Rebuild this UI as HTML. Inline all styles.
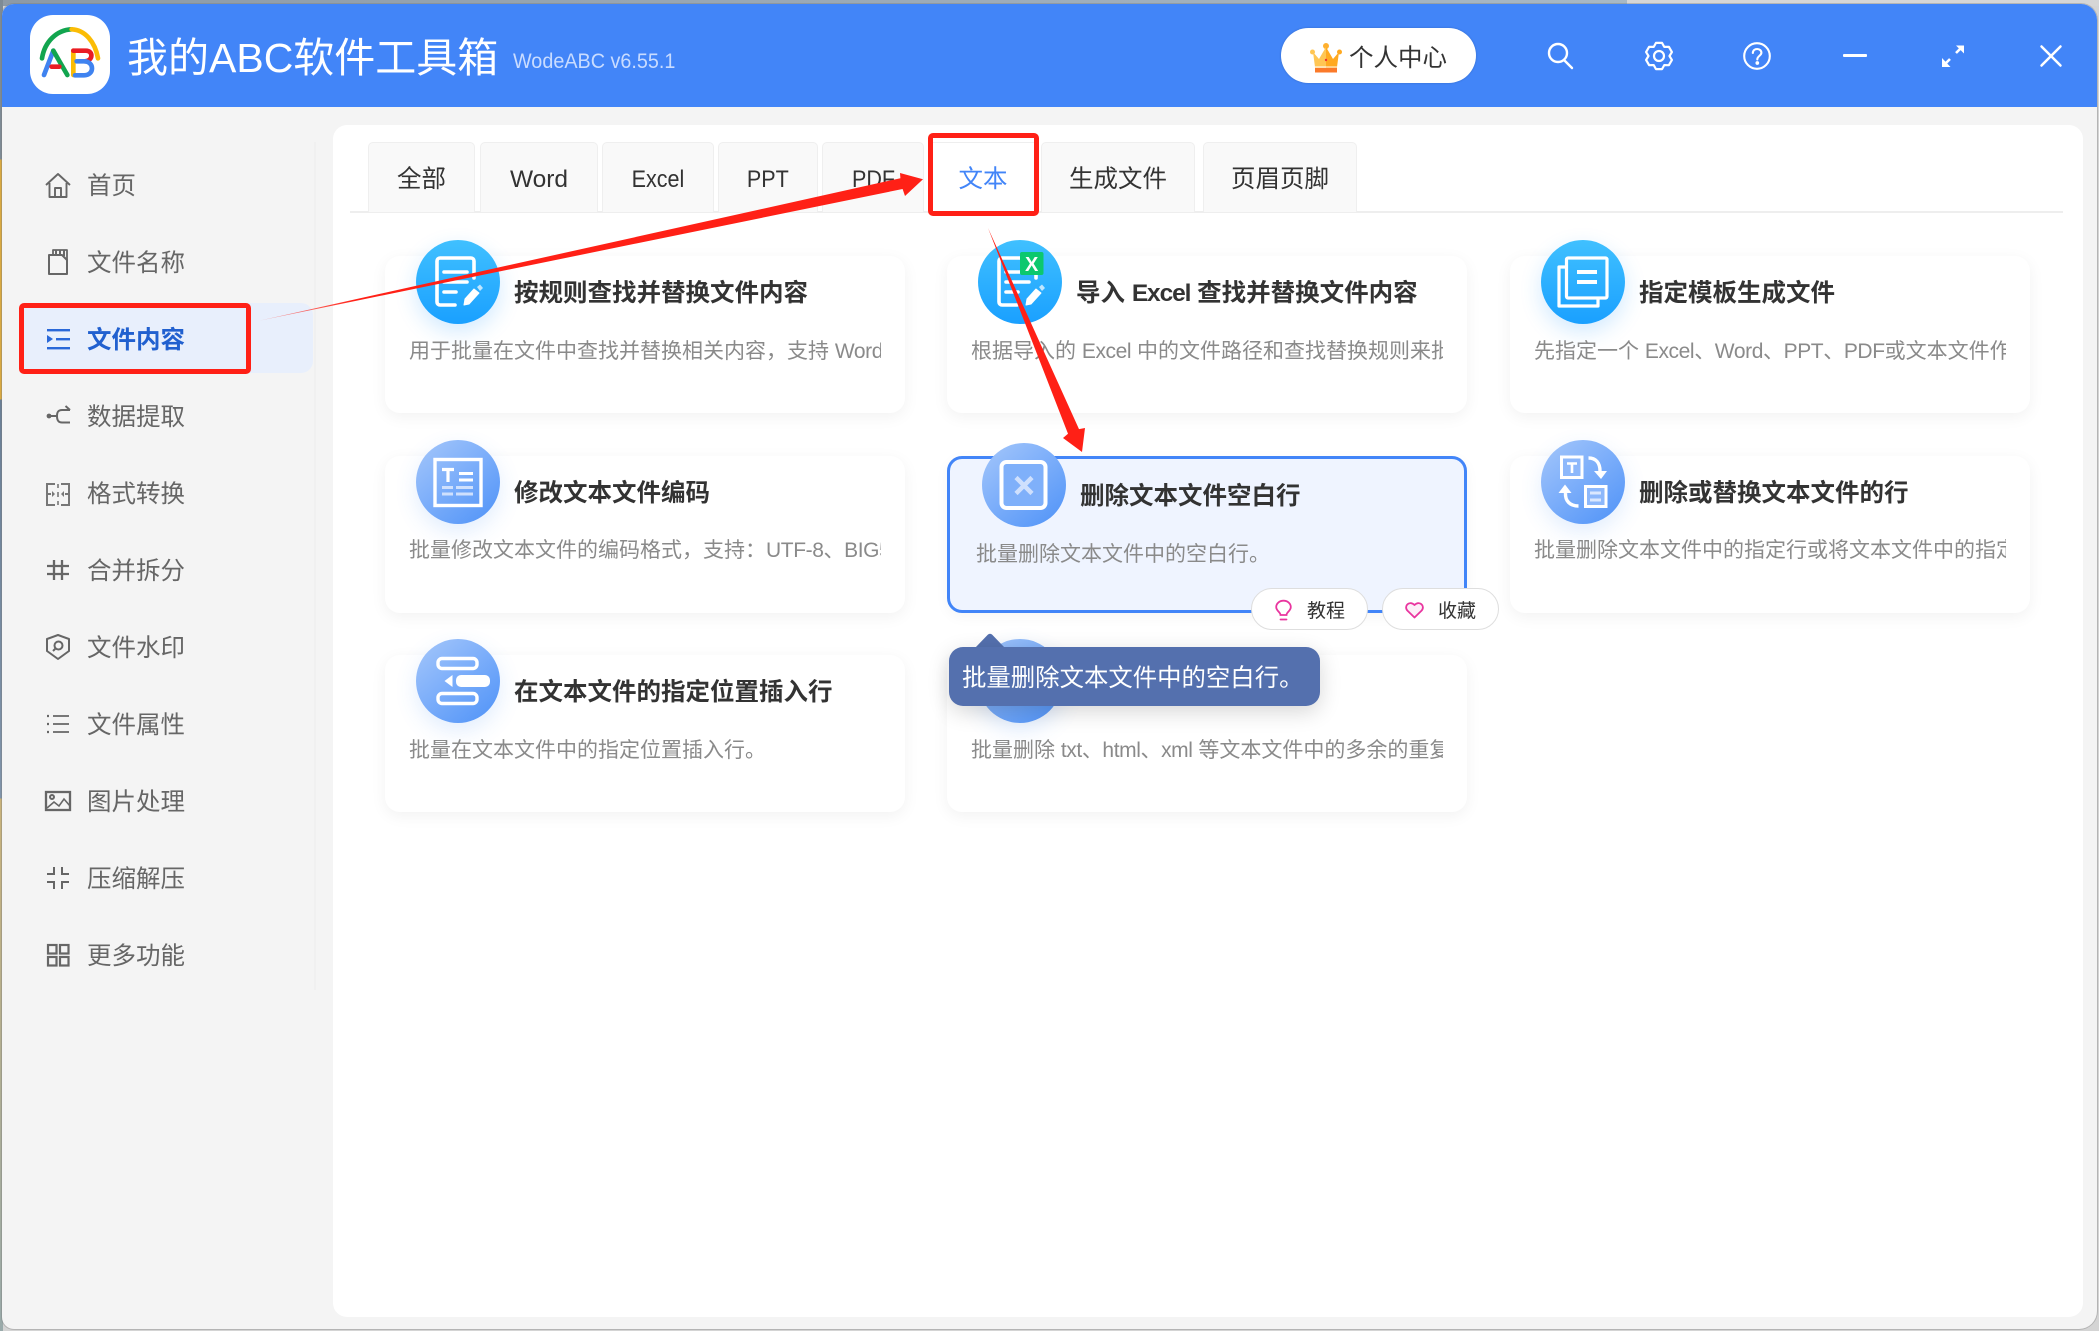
<!DOCTYPE html>
<html lang="zh">
<head>
<meta charset="utf-8">
<title>我的ABC软件工具箱</title>
<style>
html,body{margin:0;padding:0;width:2099px;height:1331px;overflow:hidden;background:#d4d4d4;font-family:"Liberation Sans","Noto Sans CJK SC",sans-serif;}
div,span{box-sizing:border-box;}
.a{position:absolute;}
#topstrip{left:0;top:0;width:2099px;height:6px;background:linear-gradient(90deg,#8d9aa6 0,#a2b1be 60%,#a9bac6 1730px,#39a9c8 1745px,#2f8cc0 1850px,#1f5fa8 2060px,#1f5fa8 2060px);}
#topstrip2{left:1627px;top:0;width:472px;height:6px;background:#d6d6d6;}
#leftstrip{left:0;top:0;width:3px;height:1331px;background:linear-gradient(180deg,#7e8b95 0,#7e8b95 12%,#d9a941 12%,#d9a941 30%,#6a7f96 30%,#8094aa 60%,#c9b27a 60%,#9aa 100%);}
#win{left:2px;top:4px;width:2095px;height:1325px;background:#f4f4f4;border-radius:12px 16px 18px 12px;overflow:hidden;box-shadow:0 0 0 1px rgba(120,120,120,.35);}
#hdr{left:2px;top:4px;width:2095px;height:103px;background:#4285f8;border-radius:12px 16px 0 0;}
#logo{left:30px;top:15px;width:80px;height:79px;background:#fff;border-radius:23px;}
#appname{left:127px;top:31px;height:54px;line-height:54px;font-size:41px;color:#fff;white-space:nowrap;}
#ver{left:513px;top:46px;height:30px;line-height:30px;font-size:21.5px;color:#c9dcff;white-space:nowrap;transform:scaleX(.92);transform-origin:left center;}
#user{left:1281px;top:28px;width:195px;height:55px;background:#fff;border-radius:28px;box-shadow:0 0 2px rgba(0,0,0,.2);}
#usertxt{left:1349px;top:39.5px;height:38px;line-height:38px;font-size:24.5px;color:#333;white-space:nowrap;}
.si{position:absolute;left:44px;width:28px;height:28px;}
.st{position:absolute;left:87px;height:36px;line-height:39.5px;font-size:24.5px;color:#666;white-space:nowrap;}
#sdiv{left:314px;top:142px;width:2px;height:848px;background:#f0f0f0;}
#sact{left:22px;top:303px;width:291px;height:70px;background:#e8effc;border-radius:0 12px 12px 0;}
#panel{left:333px;top:125px;width:1750px;height:1192px;background:#fff;border-radius:14px;}
#tabline{left:350px;top:211px;width:1713px;height:2px;background:#eee;}
.tab{position:absolute;top:142px;height:70px;line-height:74px;text-align:center;font-size:24.5px;color:#333;background:#f9f9f9;border:1.5px solid #efefef;border-bottom:none;border-radius:5px 5px 0 0;white-space:nowrap;}
.tab.on{background:#fff;color:#4285f8;border-color:#eee;height:71px;}
.tab span{display:inline-block;transform:scaleX(.88);}
.c{position:absolute;width:520px;height:157px;}
.b{position:absolute;left:0;top:0;width:520px;height:157px;background:#fff;border-radius:15px;box-shadow:0 4px 16px rgba(0,0,0,.055);}
.b.on{background:#eff4ff;border:3.5px solid #4285f8;box-shadow:0 4px 14px rgba(0,0,0,.04);}
.ic{position:absolute;left:31px;top:-16px;width:84px;height:84px;border-radius:50%;}
.g1{background:linear-gradient(180deg,#40c0ff 0,#1aa0ff 100%);box-shadow:0 8px 22px rgba(30,150,255,.2);}
.g2{background:linear-gradient(140deg,#a5c7fb 0,#4e92f8 100%);box-shadow:0 8px 22px rgba(70,140,250,.16);}
.t{position:absolute;left:129px;top:18px;height:40px;line-height:40px;font-size:24.5px;font-weight:700;color:#333;white-space:nowrap;}
.d{position:absolute;left:24px;top:79.5px;width:472px;height:32px;line-height:32px;font-size:21px;color:#8a8a8a;white-space:nowrap;overflow:hidden;}
.l{letter-spacing:-.4px;}
.pill{position:absolute;top:588px;height:42px;width:117px;background:#fff;border:1.5px solid #dedede;border-radius:21px;}
.pt{position:absolute;top:596px;height:32px;line-height:32px;font-size:19px;color:#333;white-space:nowrap;}
#tip{left:949px;top:647px;width:371px;height:59px;background:#5470ae;border-radius:14px;box-shadow:0 6px 22px rgba(0,0,0,.16);color:#fff;font-size:24.4px;line-height:64px;padding-left:13px;white-space:nowrap;}
.red{position:absolute;border:5px solid #ff2016;border-radius:5px;}
svg{display:block;overflow:visible;}
</style>
</head>
<body>
<div class="a" id="topstrip"></div>
<div class="a" id="topstrip2"></div>
<div class="a" id="leftstrip"></div>
<div class="a" id="win"></div>
<div class="a" id="hdr"></div>

<div class="a" id="logo"></div>
<svg class="a" style="left:20px;top:10px" width="110" height="90" viewBox="0 0 330 270" fill="none" stroke-linecap="round">
<path d="M66 145C74 95 110 60 155 58" stroke="#12a54f" stroke-width="14"/>
<path d="M155 58C195 60 225 95 234 145" stroke="#fbbc05" stroke-width="14"/>
<path d="M72 195L100 122" stroke="#3f83f0" stroke-width="14"/>
<path d="M100 122L142 195" stroke="#12a54f" stroke-width="14"/>
<path d="M95 170H118" stroke="#ea1c24" stroke-width="14"/>
<path d="M160 122V195" stroke="#fbbc05" stroke-width="14"/>
<path d="M160 122H198C220 122 220 152 195 154" stroke="#ea1c24" stroke-width="14"/>
<path d="M165 196H192C224 196 224 154 192 154H170" stroke="#3f83f0" stroke-width="14"/>
</svg>
<div class="a" id="appname">我的ABC软件工具箱</div>
<div class="a" id="ver">WodeABC v6.55.1</div>

<div class="a" id="user"></div>
<svg class="a" style="left:1310px;top:43px" width="32" height="30" viewBox="0 0 32 30">
<circle cx="16" cy="3" r="3" fill="#ffb02e"/><circle cx="2.5" cy="9" r="2.5" fill="#ffc654"/><circle cx="29.5" cy="9" r="2.5" fill="#ffa920"/>
<path d="M3 9L9 16L16 4V24H5Z" fill="#ffc654"/><path d="M29 9L23 16L16 4V24H27Z" fill="#ffa920"/>
<rect x="5" y="23" width="11" height="2" fill="#ffe3b0"/><rect x="16" y="23" width="11" height="2" fill="#ffd08a"/>
<rect x="5" y="25" width="22" height="4.5" fill="#fb7a2a"/><circle cx="16" cy="17" r="1.2" fill="#e33"/>
</svg>
<div class="a" id="usertxt">个人中心</div>

<svg class="a" style="left:1547px;top:42px" width="28" height="28" viewBox="0 0 28 28" fill="none" stroke="#fff" stroke-width="2.4" stroke-linecap="round"><circle cx="11" cy="11" r="9"/><path d="M17 18L25 26"/></svg>
<svg class="a" style="left:1645px;top:42px" width="28" height="28" viewBox="0 0 28 28" fill="none" stroke="#fff" stroke-width="2.2" stroke-linejoin="round"><path d="M10.96 .85L17.04 .85L19.25 4.91L23.87 4.79L26.91 10.06L24.5 14L26.91 17.94L23.87 23.21L19.25 23.09L17.04 27.15L10.96 27.15L8.75 23.09L4.13 23.21L1.09 17.94L3.5 14L1.09 10.06L4.13 4.79L8.75 4.91Z"/><circle cx="14" cy="14" r="5"/></svg>
<svg class="a" style="left:1743px;top:42px" width="28" height="28" viewBox="0 0 28 28" fill="none" stroke="#fff" stroke-width="2.1" stroke-linecap="round"><circle cx="14" cy="14" r="12.8"/><path d="M9.8 11C10 8.3 12 7 14.2 7C16.6 7 18.4 8.6 18.4 10.8C18.4 13.6 14.3 14 14.3 17.5"/><circle cx="14.3" cy="21" r=".8" fill="#fff"/></svg>
<div class="a" style="left:1843px;top:54px;width:24px;height:3px;background:#fff;border-radius:1px"></div>
<svg class="a" style="left:1941px;top:44px" width="24" height="24" viewBox="0 0 24 24" fill="#fff" stroke="#fff" stroke-width="2.6"><path d="M15 9L21 3M9 15L3 21"/><path d="M15 1.5H23V9.5Z" stroke="none"/><path d="M1 14V23H9.5Z" stroke="none"/></svg>
<svg class="a" style="left:2040px;top:45px" width="22" height="22" viewBox="0 0 22 22" fill="none" stroke="#fff" stroke-width="2.5" stroke-linecap="round"><path d="M1.5 1.5L20.5 20.5M20.5 1.5L1.5 20.5"/></svg>

<!-- sidebar -->
<div class="a" id="sdiv"></div>
<div class="a" id="sact"></div>

<svg class="si" style="top:171px" viewBox="0 0 28 28" fill="none" stroke="#666" stroke-width="1.9" stroke-linejoin="round"><path d="M2 14L14 3L26 14"/><path d="M5.5 12V26H22.5V12"/><path d="M11 26V17H17V26"/></svg>
<div class="st" style="top:167px">首页</div>

<svg class="si" style="top:248px" viewBox="0 0 28 28" fill="none" stroke="#666" stroke-width="2" stroke-linejoin="round"><path d="M5 7H18L23 12V26H5Z"/><path d="M9 7V2H23V20" stroke-width="1.8"/><path d="M12 2V7M16 2V7M20 2V8"/></svg>
<div class="st" style="top:244px">文件名称</div>

<svg class="si" style="top:325px" viewBox="0 0 28 28" fill="#2a68d8"><rect x="3" y="4" width="23" height="2.4"/><rect x="12" y="13" width="14" height="2.4"/><rect x="3" y="22" width="23" height="2.4"/><path d="M3 10L9 14L3 18Z"/></svg>
<div class="st" style="top:321px;color:#2160cf;font-weight:700">文件内容</div>

<svg class="si" style="top:402px" viewBox="0 0 28 28" fill="none" stroke="#666" stroke-width="2"><circle cx="5" cy="14" r="2.4" fill="#666" stroke="none"/><path d="M5 14H13"/><path d="M13 14C13 9 15 8 18 8H26"/><path d="M13 14C13 19 15 20.5 18 20.5H26"/><path d="M21.5 4L26 8"/></svg>
<div class="st" style="top:398px">数据提取</div>

<svg class="si" style="top:480px" viewBox="0 0 28 28" fill="none" stroke="#777" stroke-width="2"><path d="M11 4H3V25H11M17 4H25V25H17M3 14H7M21 14H25"/><path d="M14 4V8M14 12V17M14 21V25" stroke-width="1.6"/><path d="M8 11L11 14L8 17Z M20 11L17 14L20 17Z" fill="#777" stroke="none"/></svg>
<div class="st" style="top:475px">格式转换</div>

<svg class="si" style="top:556px" viewBox="0 0 28 28" fill="none" stroke="#666" stroke-width="2.3"><path d="M10 4V24M18 4V24M3 10H25M3 18H25"/></svg>
<div class="st" style="top:552px">合并拆分</div>

<svg class="si" style="top:633px" viewBox="0 0 28 28" fill="none" stroke="#666" stroke-width="2" stroke-linejoin="round"><path d="M14 2L25 6V18L14 26L3 18V6Z"/><circle cx="14.5" cy="12.5" r="4"/><path d="M11.5 15.5L9 18"/></svg>
<div class="st" style="top:629px">文件水印</div>

<svg class="si" style="top:710px" viewBox="0 0 28 28" fill="none" stroke="#666" stroke-width="1.7"><path d="M9 6H25M9 14H25M9 22H25"/><path d="M3 6H5M3 14H5M3 22H5" stroke-width="2.2"/></svg>
<div class="st" style="top:706px">文件属性</div>

<svg class="si" style="top:787px" viewBox="0 0 28 28" fill="none" stroke="#666" stroke-width="2"><rect x="2" y="5" width="24" height="18" stroke-width="2.3"/><circle cx="8" cy="10" r="2"/><path d="M3 21L10 15L15 19L20 12L26 19" stroke-width="1.6"/></svg>
<div class="st" style="top:783px">图片处理</div>

<svg class="si" style="top:864px" viewBox="0 0 28 28" fill="none" stroke="#666" stroke-width="2"><path d="M3 10H10V3M25 10H18V3M3 18H10V25M25 18H18V25"/></svg>
<div class="st" style="top:860px">压缩解压</div>

<svg class="si" style="top:941px" viewBox="0 0 28 28" fill="none" stroke="#666" stroke-width="2.2"><rect x="4" y="4" width="8.5" height="8.5"/><rect x="16" y="4" width="8.5" height="8.5"/><rect x="4" y="16" width="8.5" height="8.5"/><rect x="16" y="16" width="8.5" height="8.5"/></svg>
<div class="st" style="top:937px">更多功能</div>

<!-- main panel -->
<div class="a" id="panel"></div>
<div class="a" id="tabline"></div>
<div class="tab" style="left:368px;width:107px">全部</div>
<div class="tab" style="left:480px;width:118px">Word</div>
<div class="tab" style="left:602px;width:112px"><span>Excel</span></div>
<div class="tab" style="left:718px;width:100px"><span>PPT</span></div>
<div class="tab" style="left:822px;width:102px"><span>PDF</span></div>
<div class="tab on" style="left:928px;width:110px">文本</div>
<div class="tab" style="left:1041px;width:154px">生成文件</div>
<div class="tab" style="left:1203px;width:154px">页眉页脚</div>

<!-- row 1 -->
<div class="c" style="left:385px;top:256px">
 <div class="b"></div>
 <div class="ic g1"><svg width="84" height="84" viewBox="0 0 84 84" fill="none" stroke="#fff" stroke-width="3.6" stroke-linecap="round" stroke-linejoin="round"><path d="M58 38V21A3 3 0 0 0 55 18H24A3 3 0 0 0 21 21V62A3 3 0 0 0 24 65H39"/><path d="M28 32H51M28 42H51M28 52H40"/><path d="M48 65L49 59L58 49L63 53L53 64Z" fill="#fff" stroke-width="1"/><path d="M61 47L64 44.5L67 48L64 51Z" fill="#bfe6ff" stroke="none"/></svg></div>
 <div class="t">按规则查找并替换文件内容</div>
 <div class="d">用于批量在文件中查找并替换相关内容，支持 <span class="l">Word、Excel、PPT、PDF</span></div>
</div>
<div class="c" style="left:947px;top:256px">
 <div class="b"></div>
 <div class="ic g1" style="box-shadow:none"><svg width="84" height="84" viewBox="0 0 84 84" fill="none" stroke="#fff" stroke-width="3.6" stroke-linecap="round" stroke-linejoin="round"><path d="M58 38V21A3 3 0 0 0 55 18H24A3 3 0 0 0 21 21V62A3 3 0 0 0 24 65H39"/><path d="M28 32H48M28 42H51M28 52H40"/><path d="M48 65L49 59L58 49L63 53L53 64Z" fill="#fff" stroke-width="1"/><path d="M61 47L64 44.5L67 48L64 51Z" fill="#bfe6ff" stroke="none"/><rect x="42" y="12" width="23.5" height="23" rx="2" fill="#0cc86e" stroke="none"/><text x="53.7" y="31" text-anchor="middle" fill="#fff" stroke="none" font-size="20" font-weight="700" font-family="Liberation Sans">X</text></svg></div>
 <div class="t">导入 <span style="letter-spacing:-1.1px">Excel</span> 查找并替换文件内容</div>
 <div class="d">根据导入的 <span class="l">Excel</span> 中的文件路径和查找替换规则来批量替换文件内容</div>
</div>
<div class="c" style="left:1510px;top:256px">
 <div class="b"></div>
 <div class="ic g1"><svg width="84" height="84" viewBox="0 0 84 84" fill="none" stroke="#fff" stroke-width="3.2" stroke-linejoin="round"><path d="M25 27H18V66H57V58"/><rect x="25.5" y="18" width="40.5" height="40" rx="1.5"/><path d="M36 32H56M36 42H56" stroke-width="4"/></svg></div>
 <div class="t">指定模板生成文件</div>
 <div class="d">先指定一个 <span class="l">Excel、Word、PPT、PDF</span>或文本文件作为模板文件</div>
</div>

<!-- row 2 -->
<div class="c" style="left:385px;top:455.5px">
 <div class="b"></div>
 <div class="ic g2"><svg width="84" height="84" viewBox="0 0 84 84" fill="none"><rect x="19" y="19.5" width="46" height="46" stroke="#fff" stroke-width="3.4"/><path d="M26 29.5H38M32 29.5V42" stroke="#fff" stroke-width="3.2"/><path d="M43 33.5H57M43 40H57" stroke="#fff" stroke-width="3"/><path d="M26 47.5H37M40 47.5H57M26 54H37M40 54H57" stroke="#cfe0fd" stroke-width="3"/></svg></div>
 <div class="t">修改文本文件编码</div>
 <div class="d">批量修改文本文件的编码格式，支持：<span class="l">UTF-8、BIG5、GBK、GB2312</span></div>
</div>
<div class="c" style="left:947px;top:455.5px">
 <div class="b on"></div>
 <div class="ic g2" style="left:35px;top:-13px;box-shadow:none"><svg width="84" height="84" viewBox="0 0 84 84" fill="none"><rect x="19.5" y="19" width="44" height="46" rx="5" fill="#7fb0fa" stroke="#fff" stroke-width="4"/><path d="M34 34.5L50 50.5M50 34.5L34 50.5" stroke="#cfe0fd" stroke-width="4.5"/></svg></div>
 <div class="t" style="left:133px;top:21.5px">删除文本文件空白行</div>
 <div class="d" style="left:29px;top:83px">批量删除文本文件中的空白行。</div>
</div>
<div class="c" style="left:1510px;top:455.5px">
 <div class="b"></div>
 <div class="ic g2"><svg width="84" height="84" viewBox="0 0 84 84" fill="none"><rect x="20.5" y="17" width="20.5" height="20.5" fill="#8db8fb" stroke="#fff" stroke-width="3"/><path d="M26 23.5H36M31 23.5V33" stroke="#fff" stroke-width="2.6"/><rect x="44.5" y="46.5" width="20.5" height="20" fill="#8db8fb" stroke="#fff" stroke-width="3"/><path d="M49 53H60M49 60H60" stroke="#dbe8fe" stroke-width="3"/><path d="M47.5 18C55 18 59 23 59 31" stroke="#fff" stroke-width="3.4"/><path d="M53 31H66L60 39Z" fill="#fff"/><path d="M37.5 66C29 66 24 61 24.5 53" stroke="#fff" stroke-width="3.4"/><path d="M17.5 53H30.5L24 44.5Z" fill="#fff"/></svg></div>
 <div class="t">删除或替换文本文件的行</div>
 <div class="d">批量删除文本文件中的指定行或将文本文件中的指定行替换为新内容</div>
</div>

<!-- row 3 -->
<div class="c" style="left:385px;top:655px">
 <div class="b"></div>
 <div class="ic g2"><svg width="84" height="84" viewBox="0 0 84 84" fill="none"><rect x="22" y="19.5" width="39" height="10" rx="4" stroke="#fff" stroke-width="3.4"/><rect x="40" y="36" width="34" height="12" rx="5" fill="#fff"/><path d="M36.5 36V48L28.5 42Z" fill="#fff"/><rect x="22" y="54.5" width="39" height="10" rx="4" stroke="#fff" stroke-width="3.4"/></svg></div>
 <div class="t">在文本文件的指定位置插入行</div>
 <div class="d">批量在文本文件中的指定位置插入行。</div>
</div>
<div class="c" style="left:947px;top:655px">
 <div class="b"></div>
 <div class="ic g2"></div>
 <div class="t">删除文本文件重复行</div>
 <div class="d">批量删除 <span class="l">txt、html、xml</span> 等文本文件中的多余的重复行内容</div>
</div>

<!-- hover buttons -->
<div class="pill" style="left:1251px"></div>
<svg class="a" style="left:1275px;top:600px" width="17" height="21" viewBox="0 0 17 21" fill="none" stroke="#e9359f" stroke-width="1.8" stroke-linecap="round"><path d="M5.5 15C5.5 12 1.2 11 1.2 7A7.3 6.3 0 0 1 15.8 7C15.8 11 11.5 12 11.5 15Z"/><path d="M5.5 19.5H11.5"/></svg>
<div class="pt" style="left:1307px">教程</div>
<div class="pill" style="left:1382px"></div>
<svg class="a" style="left:1405px;top:601px" width="19" height="18" viewBox="0 0 19 18" fill="#fdf0f8" stroke="#e9359f" stroke-width="1.8" stroke-linejoin="round"><path d="M9.5 16.5L2.3 9.5C-1.5 5 4.5 -1 9.5 4C14.5 -1 20.5 5 16.7 9.5Z"/></svg>
<div class="pt" style="left:1438px">收藏</div>

<!-- tooltip -->
<svg class="a" style="left:974px;top:633px" width="32" height="16" viewBox="0 0 32 16"><path d="M1 15L14 1.5Q16 0 18 1.5L31 15Z" fill="#5470ae"/></svg>
<div class="a" id="tip">批量删除文本文件中的空白行。</div>

<!-- annotations -->
<div class="red" style="left:19px;top:303px;width:232px;height:71px"></div>
<div class="red" style="left:928px;top:133px;width:111px;height:83px"></div>
<svg class="a" style="left:0;top:0" width="2099" height="1331" viewBox="0 0 2099 1331">
<defs>
<linearGradient id="ar1" gradientUnits="userSpaceOnUse" x1="259" y1="320" x2="420" y2="285"><stop offset="0" stop-color="#ff2016" stop-opacity=".35"/><stop offset=".6" stop-color="#ff2016"/></linearGradient>
</defs>
<path d="M259 320.7L900.4 178.2L900 173L923 179.3L905 196L902.6 189Z" fill="url(#ar1)"/>
<path d="M988 228L1079 429.1L1085 428L1082 452L1063 438L1068 433.7Z" fill="#ff2016"/>
</svg>
</body>
</html>
